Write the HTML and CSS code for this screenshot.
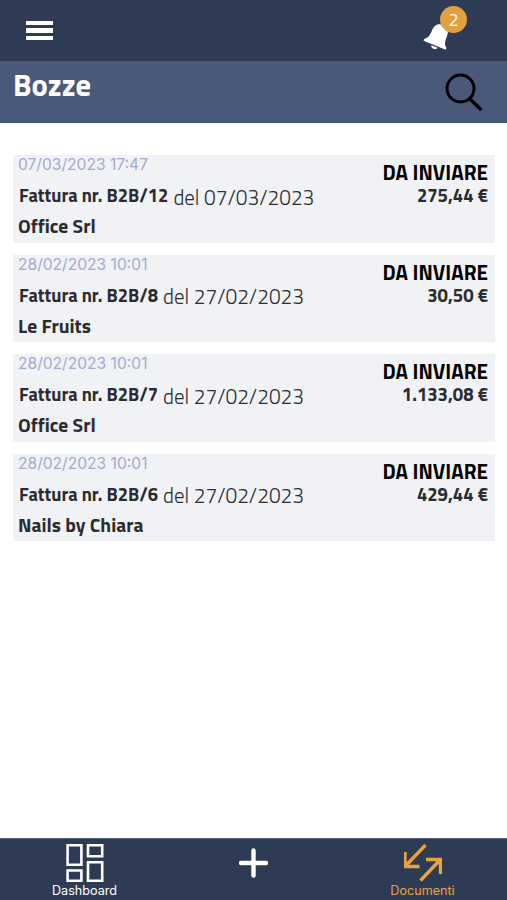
FILE: index.html
```
<!DOCTYPE html>
<html lang="it">
<head>
  <meta charset="UTF-8">
  <meta name="viewport" content="width=device-width, initial-scale=1">
  <title>Bozze</title>
  <link rel="stylesheet" href="styles.css">
</head>
<body>
  <header class="topbar">
    <button class="menu-btn" aria-label="Menu"><span></span><span></span><span></span></button>
    <div class="notifications">
      <svg class="bell" viewBox="0 0 30 30" width="30" height="30">
        <g transform="rotate(22 15 15)" fill="#fff">
          <path d="M15 2C9 2 7 6 7 11C7 17 6 20 3 22V24H27V22C24 20 23 17 23 11C23 6 21 2 15 2Z"/>
          <path d="M12 25.2H18.500C18.500 28.500 12 28.500 12 25.200Z"/>
        </g>
      </svg>
      <span class="badge">2</span>
    </div>
  </header>
  <div class="titlebar">
    <h1>Bozze</h1>
    <svg class="search" viewBox="0 0 38 38" width="38" height="38" fill="none" stroke="#000" stroke-width="3">
      <circle cx="15.500" cy="15.500" r="13.500"/>
      <path d="M24.500 25.500L36.500 37" stroke-width="3.500"/>
    </svg>
  </div>
  <main class="list">
    <article class="card">
      <div class="info">
        <div class="date">07/03/2023 17:47</div>
        <div class="doc"><b>Fattura nr. B2B/12</b><span>del 07/03/2023</span></div>
        <div class="client">Office Srl</div>
      </div>
      <div class="status">
        <strong>DA INVIARE</strong>
        <div class="amount">275,44 €</div>
      </div>
    </article>
    <article class="card">
      <div class="info">
        <div class="date">28/02/2023 10:01</div>
        <div class="doc"><b>Fattura nr. B2B/8</b><span>del 27/02/2023</span></div>
        <div class="client">Le Fruits</div>
      </div>
      <div class="status">
        <strong>DA INVIARE</strong>
        <div class="amount">30,50 €</div>
      </div>
    </article>
    <article class="card">
      <div class="info">
        <div class="date">28/02/2023 10:01</div>
        <div class="doc"><b>Fattura nr. B2B/7</b><span>del 27/02/2023</span></div>
        <div class="client">Office Srl</div>
      </div>
      <div class="status">
        <strong>DA INVIARE</strong>
        <div class="amount">1.133,08 €</div>
      </div>
    </article>
    <article class="card">
      <div class="info">
        <div class="date">28/02/2023 10:01</div>
        <div class="doc"><b>Fattura nr. B2B/6</b><span>del 27/02/2023</span></div>
        <div class="client">Nails by Chiara</div>
      </div>
      <div class="status">
        <strong>DA INVIARE</strong>
        <div class="amount">429,44 €</div>
      </div>
    </article>
  </main>
  <nav class="tabbar">
    <a class="tab">
      <svg viewBox="0 0 38 38" width="38" height="38" fill="none" stroke="#fff" stroke-width="2.600">
        <path d="M1.600 1.300H15.400V20.700H1.600ZM22 1.300H36.200V12.200H22ZM22 18.200H36.200V36.700H22ZM1.600 26.500H15.400V36.700H1.600Z"/>
      </svg>
      <span>Dashboard</span>
    </a>
    <a class="tab" aria-label="Nuovo">
      <svg viewBox="0 0 38 38" width="38" height="38" stroke="#fff" stroke-width="4.400" stroke-linecap="round">
        <path d="M18.500 6.500V31.500M6 19H31"/>
      </svg>
    </a>
    <a class="tab active">
      <svg viewBox="0 0 38 38" width="38" height="38" fill="none" stroke="#e9a33f" stroke-width="3.400">
        <path d="M21.500 1L1 22.500M1 8V22.500H15.500M16.500 36.500L36 16M22 15.500H36.500V30"/>
      </svg>
      <span>Documenti</span>
    </a>
  </nav>
</body>
</html>
```
FILE: styles.css
```
* { box-sizing: border-box; }
body {
  margin: 0;
  height: 100vh;
  display: flex;
  flex-direction: column;
  overflow: hidden;
  background: #fff;
  color: #2b2c2e;
  font-family: "Titillium Web", Roboto, sans-serif;
}
.topbar {
  height: 61px;
  flex: none;
  display: flex;
  justify-content: space-between;
  align-items: center;
  padding: 0 39px 0 26px;
  background: #2d3b54;
}
.menu-btn {
  display: flex;
  flex-direction: column;
  gap: 3px;
  width: 27px;
  padding: 0;
  border: 0;
  background: none;
}
.menu-btn span {
  height: 4.500px;
  background: #fff;
}
.notifications {
  position: relative;
  width: 45px;
  height: 61px;
  padding-top: 22px;
}
.bell { display: block; }
.badge {
  position: absolute;
  top: 6px;
  left: 17px;
  width: 27px;
  height: 27px;
  border-radius: 50%;
  background: #e3a040;
  color: #fff;
  font-size: 18px;
  line-height: 27px;
  text-align: center;
}
.titlebar {
  height: 62px;
  flex: none;
  display: flex;
  justify-content: space-between;
  padding: 7px 24px 0 13px;
  background: #4a5979;
}
.titlebar h1 {
  margin: 0;
  color: #fff;
  font-size: 30.500px;
  line-height: 34px;
}
.search { margin-top: 5px; }
.list {
  flex: 1;
  display: flex;
  flex-direction: column;
  gap: 12px;
  padding: 32px 12px 0 13px;
}
.card {
  display: flex;
  justify-content: space-between;
  height: 87.600px;
  padding: 0 7px 0 5px;
  background: #f0f2f6;
  white-space: nowrap;
}
.date {
  height: 20px;
  color: #a1abcc;
  font-family: Inter, sans-serif;
  font-size: 15.600px;
  line-height: 20px;
}
.doc {
  display: flex;
  align-items: center;
  gap: 5px;
  height: 36px;
  padding-left: 1px;
}
.doc b {
  padding-top: 4px;
  font-size: 18.400px;
  line-height: 22px;
}
.doc span {
  padding-top: 7px;
  font-size: 20.900px;
  font-weight: 300;
  line-height: 24px;
}
.client {
  font-size: 19.500px;
  font-weight: 700;
  line-height: 30px;
}
.status {
  padding-top: 6px;
  text-align: right;
}
.status strong {
  display: block;
  color: #000;
  font-size: 20.700px;
  line-height: 23px;
}
.amount {
  font-size: 18.500px;
  font-weight: 700;
  line-height: 23px;
}
.tabbar {
  height: 62px;
  flex: none;
  display: grid;
  grid-template-columns: repeat(3, 1fr);
  background: #2d3b54;
  border-top: 1px solid #53617a;
}
.tab {
  display: flex;
  flex-direction: column;
  align-items: center;
  padding-top: 5px;
  color: #fff;
  font-family: Inter, sans-serif;
  font-size: 12.600px;
  line-height: 18px;
}
.tab.active { color: #e9a33f; }
```
